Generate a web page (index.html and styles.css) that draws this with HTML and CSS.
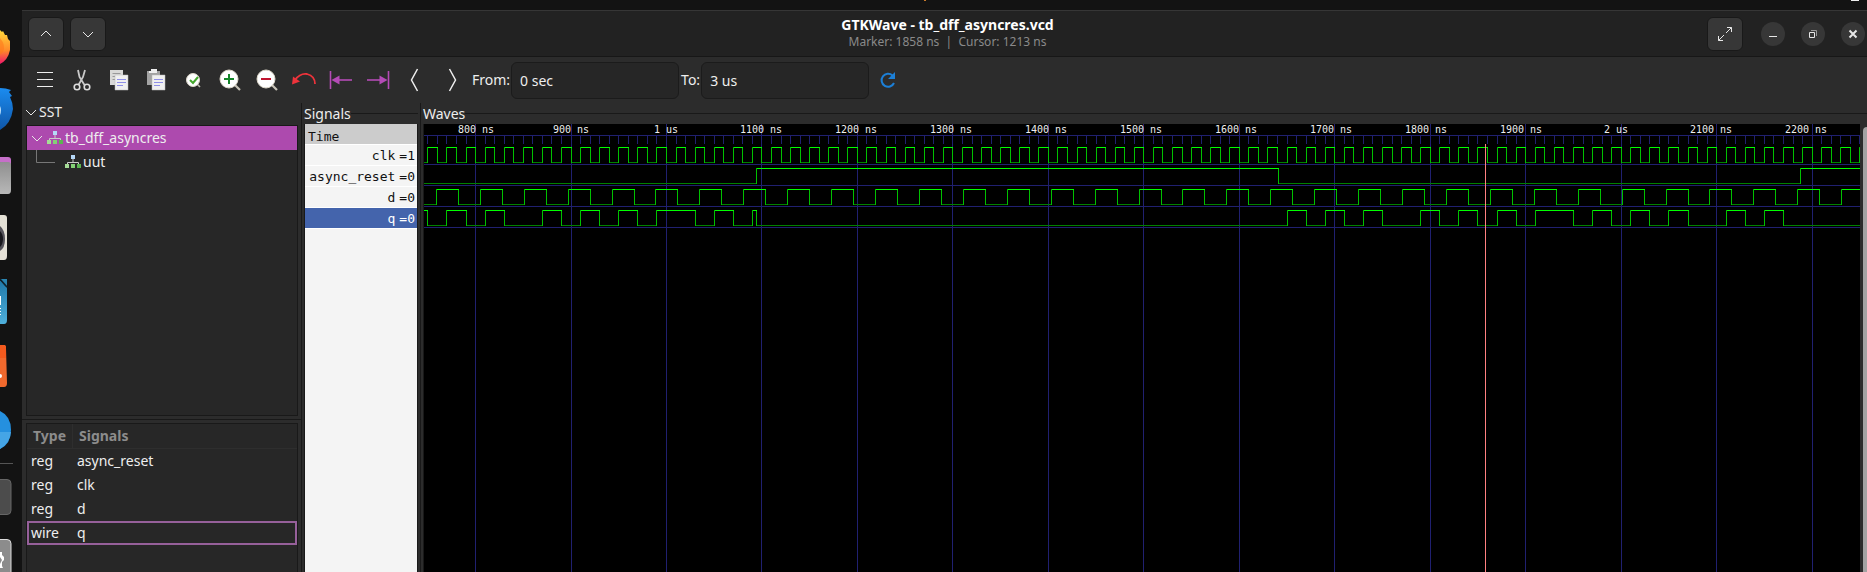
FILE: index.html
```html
<!DOCTYPE html>
<html lang="en">
<head>
<meta charset="utf-8">
<title>GTKWave - tb_dff_asyncres.vcd</title>
<link rel="stylesheet" href="styles.css">
</head>
<body>
<div class="topbar"><span class="topbar-mark"></span><span class="topbar-dot"></span></div>
<div class="desktop">
  <nav class="dock" aria-label="Dock">
    <svg width="22" height="562" viewBox="0 10 22 562">
      <defs>
        <linearGradient id="fox" x1="0" y1="0" x2="0" y2="1"><stop offset="0" stop-color="#ffd93b"/><stop offset=".6" stop-color="#ff8a2a"/><stop offset="1" stop-color="#f0156a"/></linearGradient>
        <linearGradient id="bird" x1="0" y1="0" x2="0" y2="1"><stop offset="0" stop-color="#1b8cf0"/><stop offset="1" stop-color="#0f56a8"/></linearGradient>
        <linearGradient id="file" x1="0" y1="0" x2="0" y2="1"><stop offset="0" stop-color="#8f8f8f"/><stop offset="1" stop-color="#b8b8b8"/></linearGradient>
        <linearGradient id="doc" x1="0" y1="0" x2="0" y2="1"><stop offset="0" stop-color="#1f78a8"/><stop offset="1" stop-color="#4fb0dc"/></linearGradient>
      </defs>
      <path d="M0 30l2 2 1-1 2 4 2 0 1 4 2 2v9q-2 10-10 14z" fill="url(#fox)"/>
      <path d="M0 38q6 7 3 14l-3 3z" fill="#ff7a1c" opacity=".6"/>
      <path d="M0 88q6 0 11 2l-2 2 3 4-2 1q3 6 3 12-2 15-13 21z" fill="url(#bird)"/>
      <path d="M0 106q2 4 0 9z" fill="#bfe2fb"/>
      <path d="M0 157h8q3 0 3 3v10H0z" fill="#c66fc9"/>
      <path d="M0 162h8q3 0 3 3v25q0 4-3 4H0z" fill="url(#file)"/>
      <path d="M0 215h4q3 0 3 3v38q0 4-3 4H0z" fill="#e4e0d6"/>
      <path d="M0 226q5 4 5 13t-5 12z" fill="#55535a"/><path d="M0 231q3 3 3 8t-3 8z" fill="#18171c"/>
      <path d="M0 280l7 8v32q0 4-3 4H0z" fill="url(#doc)"/><path d="M0 279h7v9z" fill="#2a84b0"/>
      <path d="M0 279l7 8" stroke="#10222c" stroke-width="1.500"/>
      <path d="M0 296h1v9H0zM0 308h1v1H0zM0 311h1v1H0zM0 314h1v1H0z" fill="#fff"/>
      <path d="M0 345h4q2 0 2 3l1 35q0 4-3 4H0z" fill="#f1692d"/><path d="M0 345h4q2 0 2 3v10H0z" fill="#f45a1e"/>
      <circle cx="0" cy="376" r="2" fill="#fff"/>
      <path d="M0 411q11 5 11 19t-11 19z" fill="#2590df"/><path d="M0 432h11q-1 11-11 17z" fill="#45a5e6"/>
      <path d="M0 463.500h13" stroke="#555"/>
      <rect x="-9" y="479.500" width="20" height="35" rx="4" fill="#4c4c4c" stroke="#666"/>
      <rect x="-9" y="539.500" width="20" height="50" rx="4" fill="#8c8c8c" stroke="#ddd"/>
      <path d="M0 552h2v3l2 2v3l-2 2v4l1 2H0v-4l2-4-2-3z" fill="#fff"/>
    </svg>
  </nav>

  <main class="window">
    <header class="header">
      <div class="header-left">
        <button class="square" aria-label="Previous"><svg width="12" height="12" viewBox="0 0 12 12"><path d="M1 8l5-5 5 5" class="line"/></svg></button>
        <button class="square" aria-label="Next"><svg width="12" height="12" viewBox="0 0 12 12"><path d="M1 4l5 5 5-5" class="line"/></svg></button>
      </div>
      <div class="titles">
        <h1>GTKWave - tb_dff_asyncres.vcd</h1>
        <p>Marker: 1858 ns&nbsp; |&nbsp; Cursor: 1213 ns</p>
      </div>
      <div class="header-right">
        <button class="square" aria-label="Full screen"><svg width="16" height="16" viewBox="0 0 16 16"><path d="M9 7l5.500-5.500M10 1.500h4.500V6M7 9l-5.500 5.500M1.500 10v4.500H6" class="line"/></svg></button>
        <div class="controls">
          <button class="round" aria-label="Minimize"><svg width="10" height="10" viewBox="0 0 10 10"><path d="M1 7.500h8" class="line"/></svg></button>
          <button class="round" aria-label="Restore"><svg width="10" height="10" viewBox="0 0 10 10"><path d="M3 1.500h5.500V7" fill="none" stroke="#999"/><path d="M1.500 3.500h5v5h-5z" class="line"/></svg></button>
          <button class="round" aria-label="Close"><svg width="10" height="10" viewBox="0 0 10 10"><path d="M1.500 1.500l7 7M8.500 1.500l-7 7" class="line bold"/></svg></button>
        </div>
      </div>
    </header>

    <div class="toolbar">
      <button class="tool" aria-label="Menu"><svg width="24" height="24" viewBox="0 0 24 24"><path d="M4 4.500h16M4 11.500h16M4 18.500h16" stroke="#eee"/></svg></button>
      <button class="tool" aria-label="Cut"><svg width="24" height="24" viewBox="0 0 24 24"><path d="M8 2l1.500 7 5 8M15 2l-2 7-4.500 8" fill="none" stroke="#c9c9c9" stroke-width="1.800"/><circle cx="7" cy="19" r="2.800" fill="none" stroke="#ddd" stroke-width="1.600"/><circle cx="17" cy="19" r="2.800" fill="none" stroke="#ddd" stroke-width="1.600"/></svg></button>
      <button class="tool" aria-label="Copy"><svg width="24" height="24" viewBox="0 0 24 24"><path d="M3 2h13v15H3z" fill="#d9d9d7"/><path d="M5.500 5.500h8M5.500 8.500h6M5.500 11.500h3" stroke="#999"/><path d="M8 7h13v15H8z" fill="#f0f0f0" stroke="#bbb" stroke-width=".5"/><path d="M10 11.500h9M10 14.500h9M10 17.500h6" stroke="#8f8fe8"/></svg></button>
      <button class="tool" aria-label="Paste"><svg width="24" height="24" viewBox="0 0 24 24"><path d="M3 3h13v14H3z" fill="#a3a3a3"/><path d="M7 1h6v4H5V3h2z" fill="#eee"/><path d="M8 7h13v15H8z" fill="#f0f0f0" stroke="#bbb" stroke-width=".5"/><path d="M10 11.500h9M10 14.500h9M10 17.500h6" stroke="#8f8fe8"/></svg></button>
      <button class="tool" aria-label="Zoom fit"><svg width="24" height="24" viewBox="0 0 24 24"><path d="M15 15l4 4" stroke="#bbb8ae" stroke-width="1.600"/><circle cx="12" cy="12" r="6.500" fill="#fff" stroke="#ddd8ca"/><path d="M9 12l3 3 5-6" fill="none" stroke="#43a72c" stroke-width="2"/></svg></button>
      <button class="tool" aria-label="Zoom in"><svg width="24" height="24" viewBox="0 0 24 24"><path d="M17 17l5 5" stroke="#c8c4b8" stroke-width="2.200"/><circle cx="11" cy="11" r="9" fill="#fff" stroke="#ddd8ca"/><path d="M6 11h10M11 6v10" stroke="#15862a" stroke-width="2"/></svg></button>
      <button class="tool" aria-label="Zoom out"><svg width="24" height="24" viewBox="0 0 24 24"><path d="M17 17l5 5" stroke="#c8c4b8" stroke-width="2.200"/><circle cx="11" cy="11" r="9" fill="#fff" stroke="#ddd8ca"/><path d="M6 11h10" stroke="#c0152f" stroke-width="2"/></svg></button>
      <button class="tool" aria-label="Zoom undo"><svg width="24" height="24" viewBox="0 0 24 24"><path d="M3 12q5-7 12-6 8 2 8 10" fill="none" stroke="#ed333b" stroke-width="1.800"/><path d="M0 16.500l1-8 7 5z" fill="#ed333b"/></svg></button>
      <button class="tool" aria-label="To start"><svg width="24" height="24" viewBox="0 0 24 24"><path d="M1.500 3v18" stroke="#b44bb6" stroke-width="1.600"/><path d="M5 12h18" stroke="#b44bb6" stroke-width="1.600"/><path d="M2.500 12l8-4.500v9z" fill="#b44bb6"/></svg></button>
      <button class="tool" aria-label="To end"><svg width="24" height="24" viewBox="0 0 24 24"><path d="M22.500 3v18" stroke="#b44bb6" stroke-width="1.600"/><path d="M1 12h18" stroke="#b44bb6" stroke-width="1.600"/><path d="M21.500 12l-8-4.500v9z" fill="#b44bb6"/></svg></button>
      <button class="tool" aria-label="Previous edge"><svg width="24" height="24" viewBox="0 0 24 24"><path d="M14.500 1l-6 11 6 11" fill="none" stroke="#eee" stroke-width="1.500"/></svg></button>
      <button class="tool" aria-label="Next edge"><svg width="24" height="24" viewBox="0 0 24 24"><path d="M9.500 1l6 11-6 11" fill="none" stroke="#eee" stroke-width="1.500"/></svg></button>
      <label class="range" for="from">From:</label>
      <input class="entry" id="from" type="text" value="0 sec">
      <label class="range" for="to">To:</label>
      <input class="entry" id="to" type="text" value="3 us">
      <button class="tool" aria-label="Reload"><svg width="24" height="24" viewBox="0 0 24 24"><path d="M18 15a6.500 6.500 0 1 1-1.500-7.500" fill="none" stroke="#1c7fd6" stroke-width="2"/><path d="M19 4v7h-7z" fill="#1c7fd6"/></svg></button>
    </div>

    <div class="panes">
      <section class="side">
        <h2 class="sst"><svg width="12" height="12" viewBox="0 0 12 12"><path d="M1 4l5 5 5-5" class="line"/></svg>SST</h2>
        <ul class="tree">
          <li class="node selected">
            <svg class="expander" width="12" height="12" viewBox="0 0 12 12"><path d="M1 4l5 5 5-5" class="line"/></svg>
            <svg width="16" height="16" viewBox="0 0 16 16"><path d="M8 5v3M2.500 10V8.500h11V10" fill="none" stroke="#ccc"/><path d="M6 1h4v4H6z" fill="#b5d8f7"/><path d="M0 10h4v4H0z" fill="#a5dc96"/><path d="M6 10h4v4H6z" fill="#84cf76"/><path d="M12 10h4v4h-4z" fill="#5cb452"/></svg>
            <span>tb_dff_asyncres</span>
          </li>
          <li class="node">
            <svg class="branch" width="30" height="24" viewBox="0 0 30 24"><path d="M1.500 0v12.500H20" fill="none" stroke="#777"/></svg>
            <svg width="16" height="16" viewBox="0 0 16 16"><path d="M8 5v3M2.500 10V8.500h11V10" fill="none" stroke="#ccc"/><path d="M6 1h4v4H6z" fill="#b5d8f7"/><path d="M0 10h4v4H0z" fill="#a5dc96"/><path d="M6 10h4v4H6z" fill="#84cf76"/><path d="M12 10h4v4h-4z" fill="#5cb452"/></svg>
            <span>uut</span>
          </li>
        </ul>
        <div class="list">
          <table class="facts">
            <thead><tr><th class="type">Type</th><th>Signals</th></tr></thead>
            <tbody>
              <tr><td>reg</td><td>async_reset</td></tr>
              <tr><td>reg</td><td>clk</td></tr>
              <tr><td>reg</td><td>d</td></tr>
              <tr class="focused"><td>wire</td><td>q</td></tr>
            </tbody>
          </table>
        </div>
      </section>

      <section class="signals">
        <h2 class="frame-title">Signals</h2>
        <ul class="names">
          <li class="time">Time</li>
          <li><span>clk</span><span>=1</span></li>
          <li><span>async_reset</span><span>=0</span></li>
          <li><span>d</span><span>=0</span></li>
          <li class="active"><span>q</span><span>=0</span></li>
        </ul>
      </section>

      <section class="waves">
        <h2 class="frame-title">Waves</h2>
        <div class="wave-row">
          <svg class="plot" id="plot" role="img" aria-label="Waveforms"></svg>
          <div class="scroll"></div>
        </div>
      </section>
    </div>
  </main>
</div>
<script src="waves.js"></script>
</body>
</html>
```
FILE: styles.css
```css
* { box-sizing: border-box; margin: 0; padding: 0; }

body {
  display: flex;
  flex-direction: column;
  height: 100vh;
  overflow: hidden;
  background: #131313;
  color: #eeeeee;
  font: 14px/20px "Noto Sans", sans-serif;
}

button { border: 0; background: none; color: inherit; display: flex; align-items: center; justify-content: center; }
svg { display: block; flex: none; }
ul { list-style: none; }
h1, h2 { font-size: inherit; font-weight: normal; }

.line { fill: none; stroke: #e6e6e6; stroke-width: 1; }
.line.bold { stroke-width: 2; }

.topbar { display: flex; justify-content: space-between; flex: none; height: 10px; padding: 0 8px 0 924px; }
.topbar-mark { width: 2px; height: 1px; background: #c87a2a; }
.topbar-dot { width: 8px; height: 1px; background: #eeeeee; }

.desktop { display: flex; flex: 1; min-height: 0; }
.dock { flex: none; width: 22px; overflow: hidden; }

.window { display: flex; flex-direction: column; flex: 1; min-width: 0; background: #2c2c2c; }

.header {
  display: grid;
  grid-template-columns: 1fr auto 1fr;
  align-items: center;
  height: 47px;
  flex: none;
  padding: 0 2px 0 6px;
  background: #222222;
  border-top: 1px solid #363636;
  border-bottom: 1px solid #171717;
}
.header-left { display: flex; gap: 6px; }
.header-right { display: flex; justify-content: flex-end; align-items: center; gap: 18px; }
.square { width: 36px; height: 34px; border: 1px solid #191919; border-radius: 6px; background: #373737; }
.controls { display: flex; gap: 16px; }
.round { width: 24px; height: 24px; border-radius: 50%; background: #373737; }
.titles { padding: 0 0 2px 2px; text-align: center; }
.titles h1 { font-size: 14px; line-height: 18px; font-weight: bold; color: #ffffff; }
.titles p { font-size: 12px; line-height: 15px; color: #8a8a8a; }

.toolbar { display: flex; align-items: center; flex: none; height: 46px; padding-left: 4px; }
.tool { width: 37px; height: 36px; flex: none; }
.range { padding: 0 1px 0 2px; }
.entry {
  width: 168px;
  height: 37px;
  padding: 0 8px;
  border: 1px solid #1b1b1b;
  border-radius: 6px;
  background: #262626;
  color: #eeeeee;
  font: inherit;
}

.panes { display: flex; flex: 1; min-height: 0; }

.side { display: flex; flex-direction: column; width: 280px; flex: none; border-right: 1px solid #191919; }
.sst { display: flex; align-items: center; gap: 2px; height: 22px; padding: 0 0 4px 3px; flex: none; }
.tree { flex: none; height: 291px; margin: 0 3px 3px 4px; border: 1px solid #191919; background: #272727; }
.node { display: flex; align-items: center; height: 24px; gap: 2px; padding-left: 4px; }
.node.selected { background: #ad4aae; }
.expander { margin-right: 2px; }
.branch { margin-left: 4px; margin-right: -2px; }
.list { display: flex; flex: 1; min-height: 0; border-top: 1px solid #191919; padding: 3px 3px 0 4px; overflow: hidden; }
.facts { display: block; flex: 1; border: 1px solid #191919; border-bottom: 0; background: #272727; }
.facts thead, .facts tbody { display: block; }
.facts tr { display: flex; height: 24px; align-items: center; padding: 0 4px; }
.facts thead tr { height: 25px; padding: 0; border-bottom: 1px solid #2e2e2e; color: #8c8c8c; }
.facts th { padding-left: 6px; line-height: 24px; text-align: left; font-weight: bold; }
.facts th.type { width: 46px; border-right: 1px solid #2e2e2e; }
.facts td:first-child { width: 46px; }
.facts .focused { border: 2px solid #96609a; padding: 0 2px; }

.frame-title { display: flex; align-items: center; height: 21px; flex: none; }
.frame-title::after { content: ""; flex: 1; height: 1px; background: #191919; }

.signals { display: flex; flex-direction: column; width: 119px; flex: none; padding: 0 2px 0 2px; border-right: 1px solid #191919; }
.names {
  flex: 1;
  border-left: 1px solid #191919;
  border-right: 1px solid #191919;
  background: #f4f4f4;
  color: #111111;
  font: 13px/21px "DejaVu Sans Mono", monospace;
}
.names li { display: flex; justify-content: flex-end; gap: 4px; height: 21px; padding: 0 2px; border-bottom: 1px solid #ffffff; }
.names .time { justify-content: flex-start; padding-left: 3px; line-height: 25px; background: #cccccc; }
.names .active { background: #4464ac; color: #ffffff; }

.waves { display: flex; flex-direction: column; flex: 1; min-width: 0; padding-left: 2px; }
.wave-row { display: flex; flex: 1; min-height: 0; }
.plot { flex: 1; min-width: 0; height: 100%; background: #000000; overflow: hidden; border-left: 1px solid #191919; }
.scroll { width: 4px; flex: none; margin: 3px 0 0 3px; border-radius: 4px 0 0 0; background: #a3a3a3; }
.grid { fill: none; stroke: #202070; }
.high { fill: none; stroke: #00ff00; }
.low { fill: none; stroke: #008000; }
.edge { fill: none; stroke: #00c000; }
.marker { stroke: #ff8080; }
.stamp { fill: #eeeeee; font: 10px "DejaVu Sans Mono", monospace; text-anchor: middle; }
```
FILE: waves.js
```js
// Time axis: nanoseconds to pixel columns.
const NS = "http://www.w3.org/2000/svg";
const plot = document.getElementById("plot");
const WIDTH = plot.getBoundingClientRect().width;
const END = 800 + Math.ceil((WIDTH - 51) / 0.9547);
const col = t => Math.floor(51.56 + (t - 800) * 0.9547) + 0.5;

function add(name, attrs, text) {
  const el = document.createElementNS(NS, name);
  for (const k in attrs) el.setAttribute(k, attrs[k]);
  if (text) el.textContent = text;
  plot.appendChild(el);
}

function every(first, step) {
  const out = [];
  for (let t = first; t < END; t += step) out.push(t);
  return out;
}

// Each trace: starting level and the times at which it toggles.
const traces = [
  { level: 0, toggles: every(750, 10) },
  { level: 0, toggles: every(1094, 547) },
  { level: 0, toggles: every(759, 23) },
  { level: 1, toggles: [750, 770, 790, 810, 830, 870, 890, 910, 930, 950, 970, 990, 1030, 1050,
    1070, 1090, 1094, 1650, 1670, 1690, 1710, 1730, 1750, 1790, 1810, 1830, 1850, 1870, 1890,
    1910, 1950, 1970, 1990, 2010, 2030, 2050, 2070, 2110, 2130, 2150, 2170].filter(t => t < END) }
];

let grid = `M0 11.5H${WIDTH}`;
for (let t = 750; t < END; t += 10) {
  grid += `M${col(t)} 12V20`;
  if (t % 100 === 0) grid += `M${col(t)} 0V9999`;
}
traces.forEach((_, i) => { grid += `M0 ${40.5 + 21 * i}H${WIDTH}`; });
add("path", { class: "grid", d: grid });

traces.forEach((trace, i) => {
  const top = 23.5 + 21 * i, bottom = top + 15;
  let level = trace.level, x = 0, high = "", low = "", edge = "";
  for (const t of [...trace.toggles, END]) {
    const next = col(t);
    if (level) high += `M${x} ${top}H${next + 0.5}`;
    else low += `M${x} ${bottom}H${next + 0.5}`;
    if (t !== END) edge += `M${next} ${top}V${bottom + 0.5}`;
    x = next;
    level = 1 - level;
  }
  add("path", { class: "low", d: low });
  add("path", { class: "edge", d: edge });
  add("path", { class: "high", d: high });
});

// Labels are spaced at a whole number of pixels.
for (let i = 0; 52 + 95 * i < WIDTH - 24; i++) {
  const t = 800 + 100 * i;
  add("text", { class: "stamp", x: 52 + 95 * i, y: 9 }, t % 1000 ? t + " ns" : t / 1000 + " us");
}
add("path", { class: "marker", d: `M${col(1858)} 20V9999` });
```
